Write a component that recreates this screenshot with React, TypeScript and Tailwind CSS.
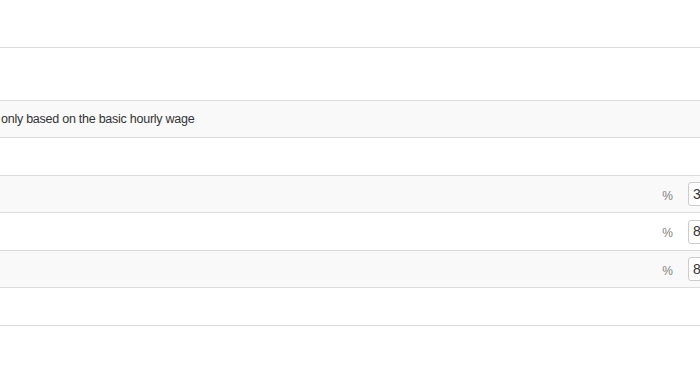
import React from 'react';

type Row = {
  label?: string;
  value?: string;
  striped?: boolean;
};

const rows: Row[] = [
  {},
  { label: 'only based on the basic hourly wage', striped: true },
  {},
  { value: '3', striped: true },
  { value: '8' },
  { value: '8', striped: true },
  {},
];

const heights = ['h-[53px]', 'h-[37px]', 'h-[38px]', 'h-[37px]', 'h-[38px]', 'h-[37px]', 'h-[38px]'];

export default function App() {
  return (
    <div className="w-[700px] h-[372px] overflow-hidden bg-white text-[13px] text-[#333] font-['Liberation_Sans',Arial,sans-serif]">
      <div className="w-[770px]">
        <div className="h-[47px]" />
        {rows.map((row, i) => (
          <div
            key={i}
            className={`flex items-center border-t border-[#dddddd] ${heights[i]} ${row.striped ? 'bg-[#f9f9f9]' : 'bg-white'}`}
          >
            <div className="flex-1 pl-[1px] text-[12.5px] tracking-[-0.25px] mt-[1px]">{row.label}</div>
            {row.value && (
              <>
                <span className="text-[12px] text-[#808080] mt-[3px] mr-[1px]">%</span>
                <div className="ml-[14px] mr-[12px] w-[70px] h-[24px] flex items-center pl-[4px] border border-[#cccccc] rounded-[3px] bg-white text-[14px] text-[#333]">
                  {row.value}
                </div>
              </>
            )}
          </div>
        ))}
        <div className="border-t border-[#dddddd] h-[47px]" />
      </div>
    </div>
  );
}
